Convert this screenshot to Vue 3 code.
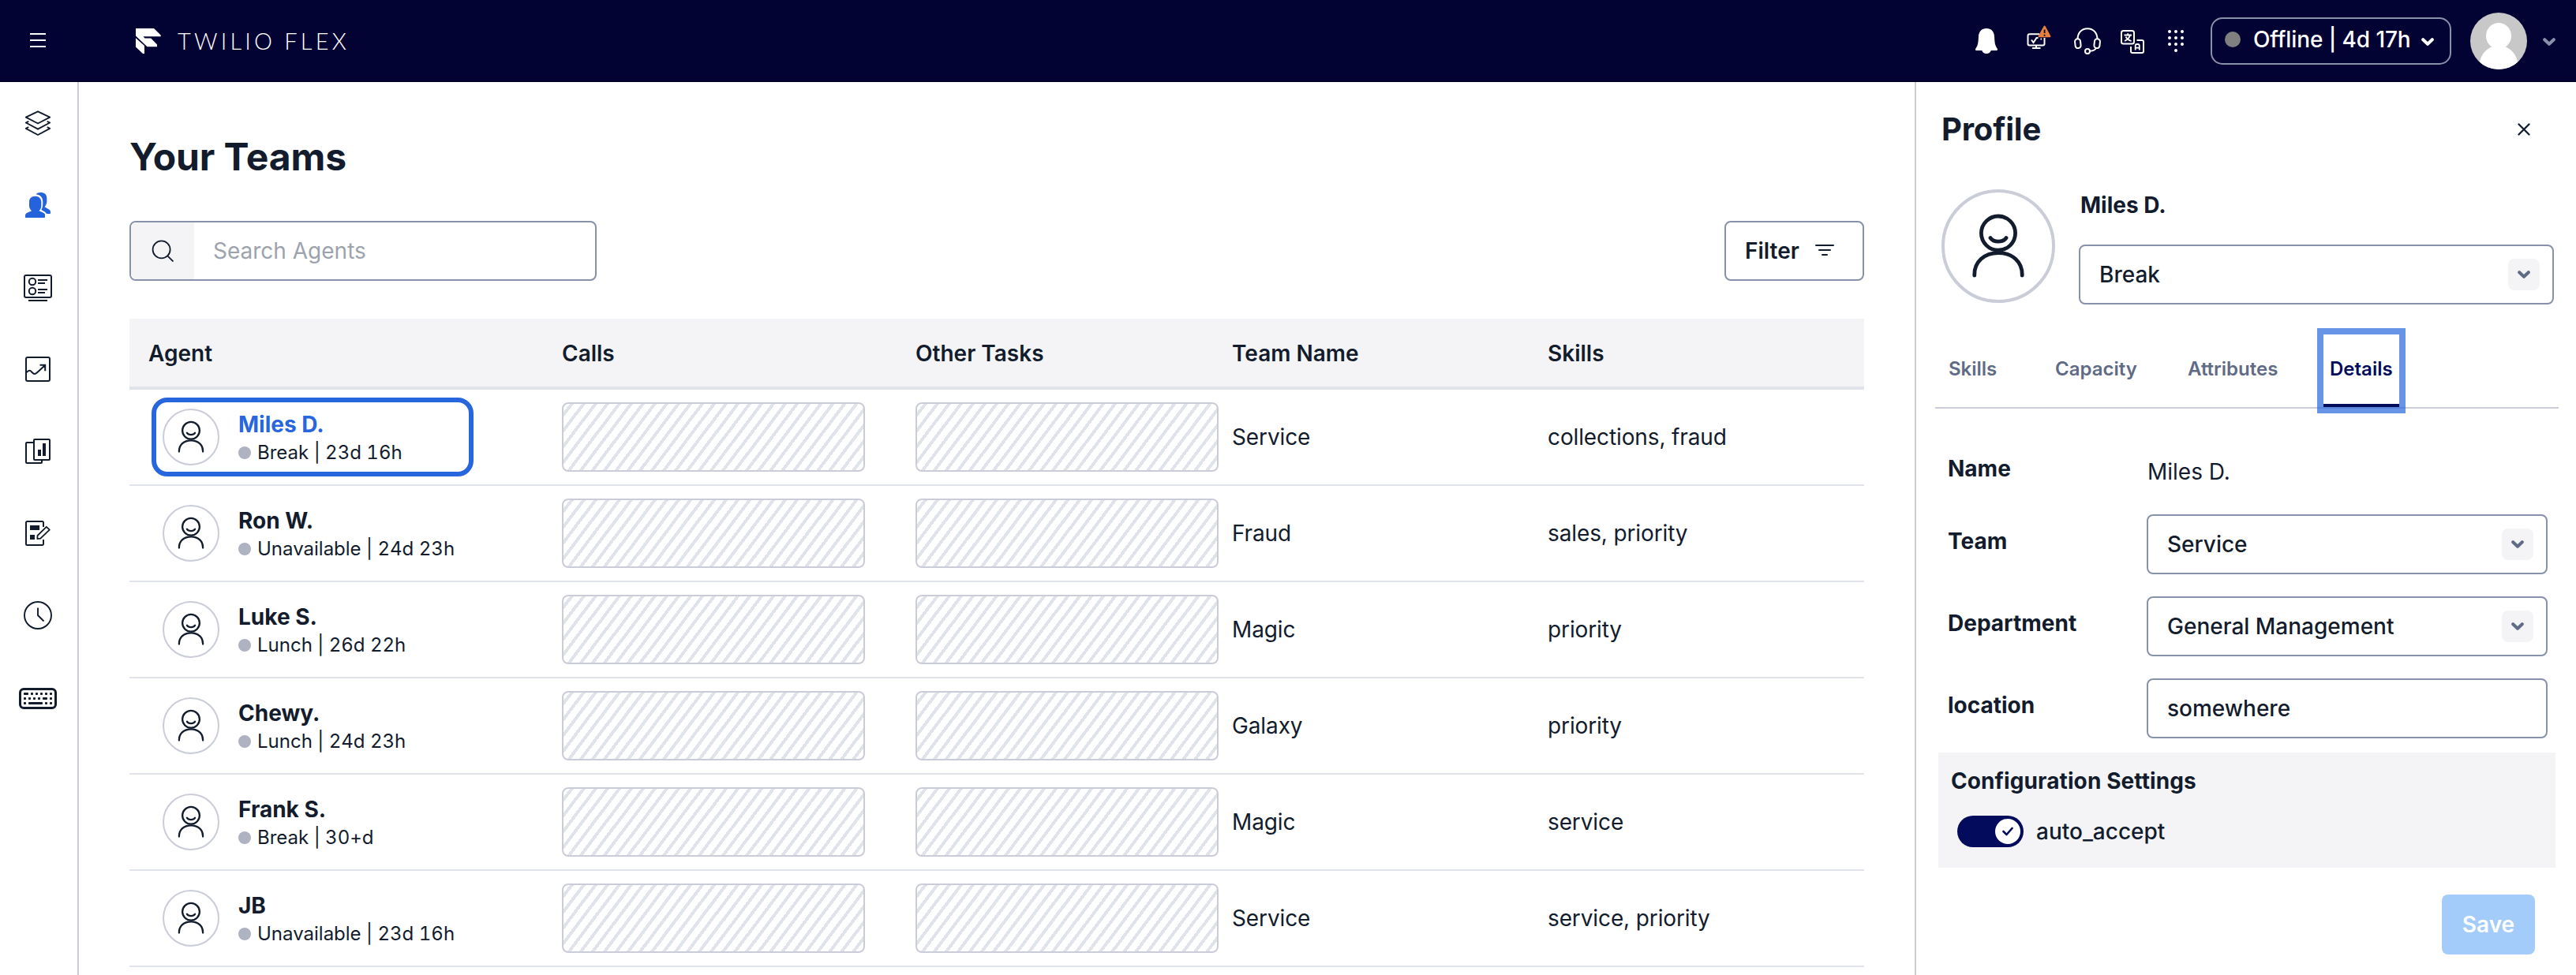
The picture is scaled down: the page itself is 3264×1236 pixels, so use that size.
<script setup>
const agents = [
  { name: 'Miles D.', status: 'Break', time: '23d 16h', team: 'Service', skills: 'collections, fraud', selected: true },
  { name: 'Ron W.', status: 'Unavailable', time: '24d 23h', team: 'Fraud', skills: 'sales, priority' },
  { name: 'Luke S.', status: 'Lunch', time: '26d 22h', team: 'Magic', skills: 'priority' },
  { name: 'Chewy.', status: 'Lunch', time: '24d 23h', team: 'Galaxy', skills: 'priority' },
  { name: 'Frank S.', status: 'Break', time: '30+d', team: 'Magic', skills: 'service' },
  { name: 'JB', status: 'Unavailable', time: '23d 16h', team: 'Service', skills: 'service, priority' },
]
const tabs = ['Skills', 'Capacity', 'Attributes', 'Details']
const fields = [
  { label: 'Team', value: 'Service', select: true },
  { label: 'Department', value: 'General Management', select: true },
  { label: 'location', value: 'somewhere', select: false },
]
const dialpad = [
  [2, 2], [10, 2], [18, 2],
  [2, 10], [10, 10], [18, 10],
  [2, 18], [10, 18], [18, 18],
  [10, 26],
]
const keys = [
  [6, 6, 6], [15, 6, 3], [21, 6, 3], [27, 6, 3], [33, 6, 3], [39, 6, 3],
  [6, 12, 3], [12, 12, 3], [18, 12, 3], [24, 12, 3], [30, 12, 6], [39, 12, 3],
  [6, 18, 3], [12, 18, 18], [33, 18, 3], [39, 18, 3],
]
</script>

<template>
  <div class="app">
    <header class="topbar">
      <div class="menu">
        <svg width="20" height="18" viewBox="0 0 20 18"><path d="M0 1h20M0 9h20M0 17h20" stroke="#fff" stroke-width="2" /></svg>
      </div>
      <div class="brand">
        <svg class="brand-mark" width="32" height="32" viewBox="0 0 32 32" fill="#fff">
          <path d="M0 0H23L31.7 8.5V10.3H9.5L11.5 12.4H19.3L27 20.4V23.2H14.5L0 9.6Z" />
          <path d="M0 12.2L11 22V32H9L0 23.5Z" />
        </svg>
        <span class="brand-name"><span>TWILIO</span><span>FLEX</span></span>
      </div>
      <div class="actions">
        <svg class="bell" width="28" height="32" viewBox="0 0 28 32" fill="#fff">
          <path d="M14 0C7.8 0 4.4 4 4 10C3.700 15 3.600 18.500 2.500 21.500C1.800 23.500 0.400 25 0.100 26.300C-0.100 27.300 0.300 28 1.200 28H8.300C9 30.400 11.200 32 14 32S19 30.400 19.700 28H26.800C27.700 28 28.100 27.300 27.900 26.300C27.600 25 26.200 23.500 25.500 21.500C24.400 18.500 24.300 15 24 10C23.600 4 20.200 0 14 0Z" />
        </svg>
        <svg class="monitor" width="32" height="32" viewBox="0 0 32 32" fill="none">
          <path d="M16 11.300H3.500a2 2 0 0 0-2 2V23.500a2 2 0 0 0 2 2H20.500a2 2 0 0 0 2-2V16M12 25.500V29M7 29H17.500" stroke="#fff" stroke-width="2" />
          <path d="M6 18.500l2.500 3.500L12.500 16h2M17.500 17.500h1.500" stroke="#fff" stroke-width="2" />
          <path d="M22.600 1.500L29.500 14.200H15.500Z" fill="#e8803d" stroke="#e8803d" stroke-width="2" stroke-linejoin="round" />
          <path d="M22.600 5.500v4.500M22.600 11.700v2" stroke="#020233" stroke-width="1.800" />
        </svg>
        <svg class="headset" width="34" height="34" viewBox="0 0 34 34" fill="none" stroke="#fff" stroke-width="2">
          <path d="M4.500 15C4.500 7 9 1.200 17 1.200S29.500 7 29.500 15" />
          <rect x="1.300" y="14.300" width="7" height="11.800" rx="3.400" transform="rotate(-6 5 20)" />
          <rect x="25.700" y="14.300" width="7" height="11.800" rx="3.400" transform="rotate(6 29 20)" />
          <circle cx="17" cy="30" r="3" />
          <path d="M20 29.800C24 29.500 27 28.500 28.200 25.500" />
        </svg>
        <svg class="translate" width="30" height="30" viewBox="0 0 30 30" fill="none" stroke="#fff" stroke-width="2">
          <rect x="1" y="1" width="16" height="16.500" rx="2.500" />
          <path d="M20.500 13H27a2 2 0 0 1 2 2V27a2 2 0 0 1-2 2H15a2 2 0 0 1-2-2V21" />
          <path d="M4.500 6.500h9.500M9.200 4.200v2.300M12 6.500C11.300 9.500 8.500 12.500 5 14M6.500 8.500C7.800 11 10.500 13 13.600 14" stroke-width="1.800" />
          <path d="M18.700 25.500V20a2 2 0 0 1 2-2h1.100a2 2 0 0 1 2 2V25.500M18.700 22.700h5.100" stroke-width="1.800" />
        </svg>
        <svg class="dialpad" width="20" height="28" viewBox="0 0 20 28" fill="#fff">
          <circle v-for="(d, i) in dialpad" :key="i" :cx="d[0]" :cy="d[1]" r="2" />
        </svg>
        <button class="status">
          <i class="status-dot"></i>
          <span class="status-text">Offline | 4d 17h</span>
          <svg width="16" height="10" viewBox="0 0 16 10" fill="none" stroke="#fff" stroke-width="4" stroke-linecap="round" stroke-linejoin="round"><path d="M2.200 2.200L8 7.800L13.800 2.200" /></svg>
        </button>
        <svg class="me" width="72" height="72" viewBox="0 0 72 72">
          <defs><clipPath id="me-clip"><circle cx="36" cy="36" r="36" /></clipPath></defs>
          <g clip-path="url(#me-clip)">
            <rect width="72" height="72" fill="#c8c8c8" />
            <ellipse cx="36" cy="29.500" rx="16" ry="16.500" fill="#fff" />
            <path d="M11 72C11 56 18 47 28 43H44C54 47 61 56 61 72Z" fill="#fff" />
          </g>
        </svg>
        <svg class="me-caret" width="16" height="10" viewBox="0 0 16 10" fill="none" stroke="#8891aa" stroke-width="4" stroke-linecap="round" stroke-linejoin="round"><path d="M2.200 2.200L8 7.800L13.800 2.200" /></svg>
      </div>
    </header>

    <div class="body">
      <nav class="rail">
        <a><svg width="36" height="36" viewBox="0 0 36 36" fill="none" stroke="#121c2d" stroke-width="1.900" stroke-linejoin="round">
          <path d="M18 3.300L33.200 10.700L18 18.500L2.800 10.700Z" />
          <path d="M6.300 15.800L2.800 17.500L18 25.700L33.200 17.500L29.700 15.800" />
          <path d="M6.300 23L2.800 24.800L18 33L33.200 24.800L29.700 23" />
        </svg></a>
        <a><svg width="36" height="36" viewBox="0 0 36 36" fill="#2463dc">
          <path d="M14.600 6.800C10 6.800 7 9.600 7 14V19C7 21 8 23.400 10 25.200L4 28C2.500 28.700 2 30 2 31.500V33C2 33.600 2.400 34 3 34H26C26.600 34 27 33.600 27 33V30.500C27 29 26 28.200 25 27.700L19.500 25.200C21.500 23.500 22.300 21 22.300 19V14C22.300 9.600 19 6.800 14.600 6.800Z" />
          <path d="M15.500 4.200C17 2.800 19 2 21.500 2C26 2 29.300 4.500 29.300 9V13.500C29.300 16.500 28 18.500 26.500 20.300L32 23.500C33.500 24.400 34 25.500 34 27V28C34 28.600 33.600 29 33 29H29C28 27 26.500 26 22.300 23.900C24 21.500 24.300 19 24.300 14C24.300 8.500 21.500 5 15.500 4.200Z" />
        </svg></a>
        <a><svg width="36" height="36" viewBox="0 0 36 36" fill="none" stroke="#121c2d" stroke-width="2">
          <rect x="1" y="3" width="34" height="28" rx="2" />
          <circle cx="11" cy="11" r="4.200" /><circle cx="11" cy="23" r="4.200" />
          <path d="M18 9h12M18 13h9M18 21h12M18 25h9M6 35h24" />
        </svg></a>
        <a><svg width="36" height="36" viewBox="0 0 36 36" fill="none" stroke="#121c2d" stroke-width="2">
          <rect x="3" y="3" width="30" height="30" rx="2" />
          <path d="M3.500 22C5.500 20 7 19 8.500 20C10.500 21.500 11.500 24 14 24C16 24 19 20 27.200 13M20.500 12.700H27.200V20.300" />
        </svg></a>
        <a><svg width="36" height="36" viewBox="0 0 36 36" fill="none" stroke="#121c2d" stroke-width="2">
          <rect x="13" y="3" width="20" height="26" rx="1" />
          <path d="M13 7H4a1 1 0 0 0-1 1V32a1 1 0 0 0 1 1H22a1 1 0 0 0 1-1V29" />
          <path d="M18 16h4v8h-4zM24 8h4v16h-4z" fill="#121c2d" stroke="none" />
        </svg></a>
        <a><svg width="36" height="36" viewBox="0 0 36 36" fill="none" stroke="#121c2d" stroke-width="2">
          <path d="M25 10V4.500A1.500 1.500 0 0 0 23.500 3H4.500A1.500 1.500 0 0 0 3 4.500V31.500A1.500 1.500 0 0 0 4.500 33H23.500A1.500 1.500 0 0 0 25 31.500V26" />
          <path d="M8 8h12v6H8zM8 20h6v6H8z" fill="#121c2d" stroke="none" />
          <path d="M17.300 25L17.500 21L28.800 9.800L32.800 13.600L21.200 24.700Z" stroke-width="1.800" stroke-linejoin="round" />
        </svg></a>
        <a><svg width="36" height="36" viewBox="0 0 36 36" fill="none" stroke="#121c2d" stroke-width="1.900">
          <circle cx="18" cy="18" r="17" />
          <path d="M18 8.500V18L25.500 25.500" />
        </svg></a>
        <a><svg width="48" height="28" viewBox="0 0 48 28" fill="#121c2d">
          <rect x="1.500" y="1.500" width="45" height="24" rx="4.500" fill="none" stroke="#121c2d" stroke-width="3" />
          <rect v-for="(k, i) in keys" :key="i" :x="k[0]" :y="k[1]" :width="k[2]" height="3" rx="0.800" />
        </svg></a>
      </nav>

      <main class="main">
        <h1>Your Teams</h1>
        <div class="tools">
          <div class="search">
            <span class="search-icon">
              <svg width="28" height="28" viewBox="0 0 28 28" fill="none" stroke="#121c2d" stroke-width="1.800"><circle cx="12.600" cy="12.400" r="11" /><path d="M20.300 20.300L27.500 27.500" /></svg>
            </span>
            <span class="search-text">Search Agents</span>
          </div>
          <button class="filter">
            <span>Filter</span>
            <svg width="24" height="14" viewBox="0 0 24 14" stroke="#121c2d" stroke-width="2" stroke-linecap="round"><path d="M1 1h22M5 7h14M9 13h6" /></svg>
          </button>
        </div>

        <section class="table">
          <div class="row head">
            <span class="first">Agent</span><span>Calls</span><span>Other Tasks</span><span>Team Name</span><span>Skills</span>
          </div>
          <div v-for="a in agents" :key="a.name" class="row">
            <div class="agent" :class="{ selected: a.selected }">
              <span class="avatar">
                <svg width="34" height="42" viewBox="0 0 34 42" fill="none" stroke="#121c2d" stroke-width="2.300" stroke-linecap="round">
                  <circle cx="17" cy="12.800" r="10.900" /><path d="M12 15.800C14 18.800 20 18.800 22 15.800M1.900 39.600V39C1.900 31 8 25.300 17 25.300S32.100 31 32.100 39V39.600" />
                </svg>
              </span>
              <span class="who">
                <strong>{{ a.name }}</strong>
                <span class="state"><i></i>{{ a.status }} | {{ a.time }}</span>
              </span>
            </div>
            <div class="slot"></div>
            <div class="slot"></div>
            <span class="cell">{{ a.team }}</span>
            <span class="cell">{{ a.skills }}</span>
          </div>
        </section>
      </main>

      <aside class="panel">
        <div class="panel-head">
          <h2>Profile</h2>
          <svg width="16" height="16" viewBox="0 0 16 16" fill="none" stroke="#121c2d" stroke-width="2.300" stroke-linecap="round"><path d="M1.500 1.500L14.500 14.500M14.500 1.500L1.500 14.500" /></svg>
        </div>

        <div class="person">
          <span class="avatar large">
            <svg width="68" height="84" viewBox="0 0 34 42" fill="none" stroke="#121c2d" stroke-width="2.400" stroke-linecap="round">
              <circle cx="17" cy="12.800" r="10.800" /><path d="M12 15.800C14 18.800 20 18.800 22 15.800M1.900 39.600V39C1.900 31 8 25.300 17 25.300S32.100 31 32.100 39V39.600" />
            </svg>
          </span>
          <div class="person-info">
            <strong>Miles D.</strong>
            <div class="control">
              <span>Break</span>
              <span class="caret"><svg width="16" height="10" viewBox="0 0 16 10" fill="none" stroke="#606b85" stroke-width="4" stroke-linecap="round" stroke-linejoin="round"><path d="M2.200 2.200L8 7.800L13.800 2.200" /></svg></span>
            </div>
          </div>
        </div>

        <div class="tabs">
          <span v-for="t in tabs" :key="t" class="tab" :class="{ active: t === 'Details' }">{{ t }}</span>
        </div>

        <div class="form">
          <div class="field plain"><label>Name</label><span class="value">Miles D.</span></div>
          <div v-for="f in fields" :key="f.label" class="field">
            <label>{{ f.label }}</label>
            <div class="control">
              <span>{{ f.value }}</span>
              <span v-if="f.select" class="caret"><svg width="16" height="10" viewBox="0 0 16 10" fill="none" stroke="#606b85" stroke-width="4" stroke-linecap="round" stroke-linejoin="round"><path d="M2.200 2.200L8 7.800L13.800 2.200" /></svg></span>
            </div>
          </div>
        </div>

        <div class="config">
          <strong>Configuration Settings</strong>
          <div class="toggle-row">
            <span class="toggle"><i><svg width="16" height="16" viewBox="0 0 16 16" fill="none" stroke="#030b5d" stroke-width="2.600" stroke-linecap="round" stroke-linejoin="round"><path d="M2.500 8L6.500 12L13.500 4" /></svg></i></span>
            <span>auto_accept</span>
          </div>
        </div>

        <button class="save">Save</button>
      </aside>
    </div>
  </div>
</template>

<style>
body {
  background: #fff;
}
</style>

<style scoped>
.app {
  width: 3264px;
  height: 1236px;
  overflow: hidden;
  display: flex;
  flex-direction: column;
  background: #fff;
  color: #121c2d;
  font-family: Inter, "Liberation Sans", sans-serif;
  font-size: 28px;
  line-height: 40px;
}
.app *,
.app {
  box-sizing: border-box;
}
svg {
  display: block;
  flex: none;
}
button {
  font: inherit;
  color: inherit;
  margin: 0;
}
strong {
  font-weight: 700;
}

/* Top bar */
.topbar {
  height: 104px;
  flex: none;
  display: flex;
  background: #020233;
  border-bottom: 1px solid #00001c;
  color: #fff;
}
.menu {
  padding: 42px 0 0 38px;
  width: 172px;
}
.brand {
  display: flex;
  padding-top: 36px;
}
.brand-name {
  display: flex;
  gap: 11px;
  margin: -4px 0 0 21px;
  font-family: Lato, sans-serif;
  font-weight: 300;
  font-size: 29px;
  letter-spacing: 4.200px;
}
.actions {
  margin-left: auto;
  display: flex;
  align-items: flex-start;
  padding-right: 26px;
}
.bell { margin: 36px 37px 0 0; }
.monitor { margin: 32px 28px 0 0; }
.headset { margin: 35px 25px 0 0; }
.translate { margin: 38px 30px 0 0; }
.dialpad { margin: 38px 34px 0 0; }
.status {
  width: 305px;
  height: 60px;
  margin: 22px 24px 0 0;
  padding: 0 20px 4px 16px;
  display: flex;
  align-items: center;
  background: none;
  border: 2px solid #8891aa;
  border-radius: 15px;
  font-weight: 500;
}
.status-dot {
  width: 20px;
  height: 20px;
  border-radius: 50%;
  background: #808080;
}
.status-text {
  margin-left: 16px;
  white-space: nowrap;
  letter-spacing: -0.100px;
}
.status svg {
  margin: 6px 0 0 auto;
}
.me { margin: 16px 20px 0 0; }
.me-caret { margin-top: 48px; }

/* Side rail */
.body {
  flex: 1;
  min-height: 0;
  display: flex;
}
.rail {
  width: 100px;
  flex: none;
  border-right: 2px solid #cacdd8;
}
.rail a {
  height: 104px;
  padding-right: 2px;
  display: flex;
  align-items: center;
  justify-content: center;
}
.rail a:last-child {
  padding-top: 4px;
}

/* Teams view */
.main {
  width: 2326px;
  flex: none;
  padding: 0 64px;
}
h1 {
  margin: 65px 0 0;
  font-size: 48px;
  line-height: 60px;
  font-weight: 700;
  letter-spacing: -0.100px;
}
.tools {
  display: flex;
  justify-content: space-between;
  margin-top: 51px;
}
.search {
  width: 592px;
  height: 76px;
  display: flex;
  align-items: center;
  border: 2px solid #8891aa;
  border-radius: 8px;
  overflow: hidden;
}
.search-icon {
  width: 80px;
  height: 72px;
  display: flex;
  align-items: center;
  justify-content: center;
  background: #f4f4f6;
}
.search-text {
  margin-left: 24px;
  color: #9da3ad;
}
.filter {
  width: 177px;
  height: 76px;
  padding: 0 36px 0 24px;
  display: flex;
  align-items: center;
  justify-content: space-between;
  background: #fff;
  border: 2px solid #8891aa;
  border-radius: 8px;
  font-weight: 600;
}
.filter svg {
  margin-top: -2px;
}
.table {
  margin-top: 48px;
}
.row {
  height: 122px;
  display: grid;
  grid-template-columns: 548px 448px 401px 400px 401px;
  align-items: center;
  border-bottom: 2px solid #e1e3ea;
}
.head {
  height: 90px;
  padding-top: 2px;
  background: #f4f4f6;
  border-bottom-width: 4px;
  font-weight: 600;
}
.first {
  padding-left: 24px;
}
.cell {
  letter-spacing: -0.120px;
}
.agent {
  width: 408px;
  height: 100px;
  margin-left: 28px;
  padding-left: 8px;
  display: flex;
  align-items: center;
  border: 6px solid transparent;
  border-radius: 20px;
}
.agent.selected {
  border-color: #2766dc;
}
.agent.selected strong {
  color: #2766dc;
}
.avatar {
  width: 72px;
  height: 72px;
  flex: none;
  display: flex;
  align-items: center;
  justify-content: center;
  border: 2px solid #cacdd8;
  border-radius: 50%;
}
.who {
  display: flex;
  flex-direction: column;
  margin-left: 24px;
  padding-top: 4px;
  white-space: nowrap;
}
.who strong {
  line-height: 36px;
}
.state {
  display: flex;
  align-items: center;
  font-size: 24px;
  line-height: 36px;
  font-variant-numeric: tabular-nums;
}
.state i {
  width: 16px;
  height: 16px;
  margin-right: 8px;
  border-radius: 50%;
  background: #aeb2c1;
}
.slot {
  width: 384px;
  height: 88px;
  border: 2px solid #cacdd8;
  border-radius: 8px;
  background: repeating-linear-gradient(127deg, #fff 0, #fff 6.300px, #e1e3ea 6.300px, #e1e3ea 10.300px, #fff 10.300px, #fff 12px);
}

/* Profile panel */
.panel {
  width: 838px;
  flex: none;
  display: flex;
  flex-direction: column;
  border-left: 2px solid #cacdd8;
}
.panel-head {
  display: flex;
  justify-content: space-between;
  align-items: center;
  height: 52px;
  margin: 34px 58px 0 32px;
}
h2 {
  margin: 0;
  font-size: 40px;
  line-height: 52px;
  font-weight: 700;
  letter-spacing: -0.200px;
}
.person {
  display: flex;
  margin: 50px 28px 0 32px;
}
.avatar.large {
  width: 144px;
  height: 144px;
  border-width: 4px;
}
.person-info {
  width: 602px;
  margin-left: 30px;
}
.person-info strong {
  display: block;
  margin-left: 2px;
  line-height: 40px;
}
.person-info .control {
  margin-top: 30px;
}
.control {
  height: 76px;
  padding: 0 16px 0 24px;
  display: flex;
  align-items: center;
  justify-content: space-between;
  border: 2px solid #8891aa;
  border-radius: 8px;
  font-weight: 500;
}
.caret {
  width: 40px;
  height: 40px;
  display: flex;
  align-items: center;
  justify-content: center;
  border-radius: 8px;
  background: #f4f4f6;
}
.tabs {
  height: 94px;
  margin: 38px 22px 0 24px;
  padding-left: 9px;
  display: grid;
  grid-template-columns: 135px 168px 180px 96px;
  border-bottom: 2px solid #cacdd8;
  font-size: 24px;
  font-weight: 600;
  color: #606b85;
}
.tab {
  height: 92px;
  padding-left: 8px;
  line-height: 88px;
}
.tab.active {
  color: #030b5d;
  border-bottom: 4px solid #030b5d;
  box-shadow: 0 0 0 8px rgba(39, 102, 220, 0.7);
}
.form {
  margin: 0 36px 0 40px;
}
.field {
  height: 76px;
  margin-bottom: 28px;
  display: flex;
  justify-content: space-between;
}
.field label {
  font-weight: 700;
  line-height: 68px;
}
.field .control {
  width: 508px;
}
.field.plain {
  height: 134px;
  margin: 0;
  padding-top: 56px;
}
.field.plain label {
  width: 253px;
  line-height: 40px;
}
.field.plain .value {
  flex: 1;
  margin-top: 4px;
}
.config {
  height: 146px;
  margin: -10px 26px 0 28px;
  padding: 16px;
  background: #f4f4f6;
}
.config strong {
  display: block;
  letter-spacing: 0.100px;
}
.toggle-row {
  display: flex;
  align-items: center;
  margin: 24px 0 0 8px;
  height: 40px;
  gap: 16px;
  font-weight: 500;
}
.toggle {
  width: 84px;
  height: 40px;
  padding: 4px;
  display: flex;
  justify-content: flex-end;
  border-radius: 20px;
  background: #030b5d;
}
.toggle i {
  width: 32px;
  height: 32px;
  display: flex;
  align-items: center;
  justify-content: center;
  border-radius: 50%;
  background: #fff;
}
.save {
  align-self: flex-end;
  width: 118px;
  height: 76px;
  margin: 34px 52px 0 0;
  padding: 0;
  border: 0;
  border-radius: 8px;
  background: #a3ccfb;
  color: #fff;
  font-weight: 600;
}
</style>
